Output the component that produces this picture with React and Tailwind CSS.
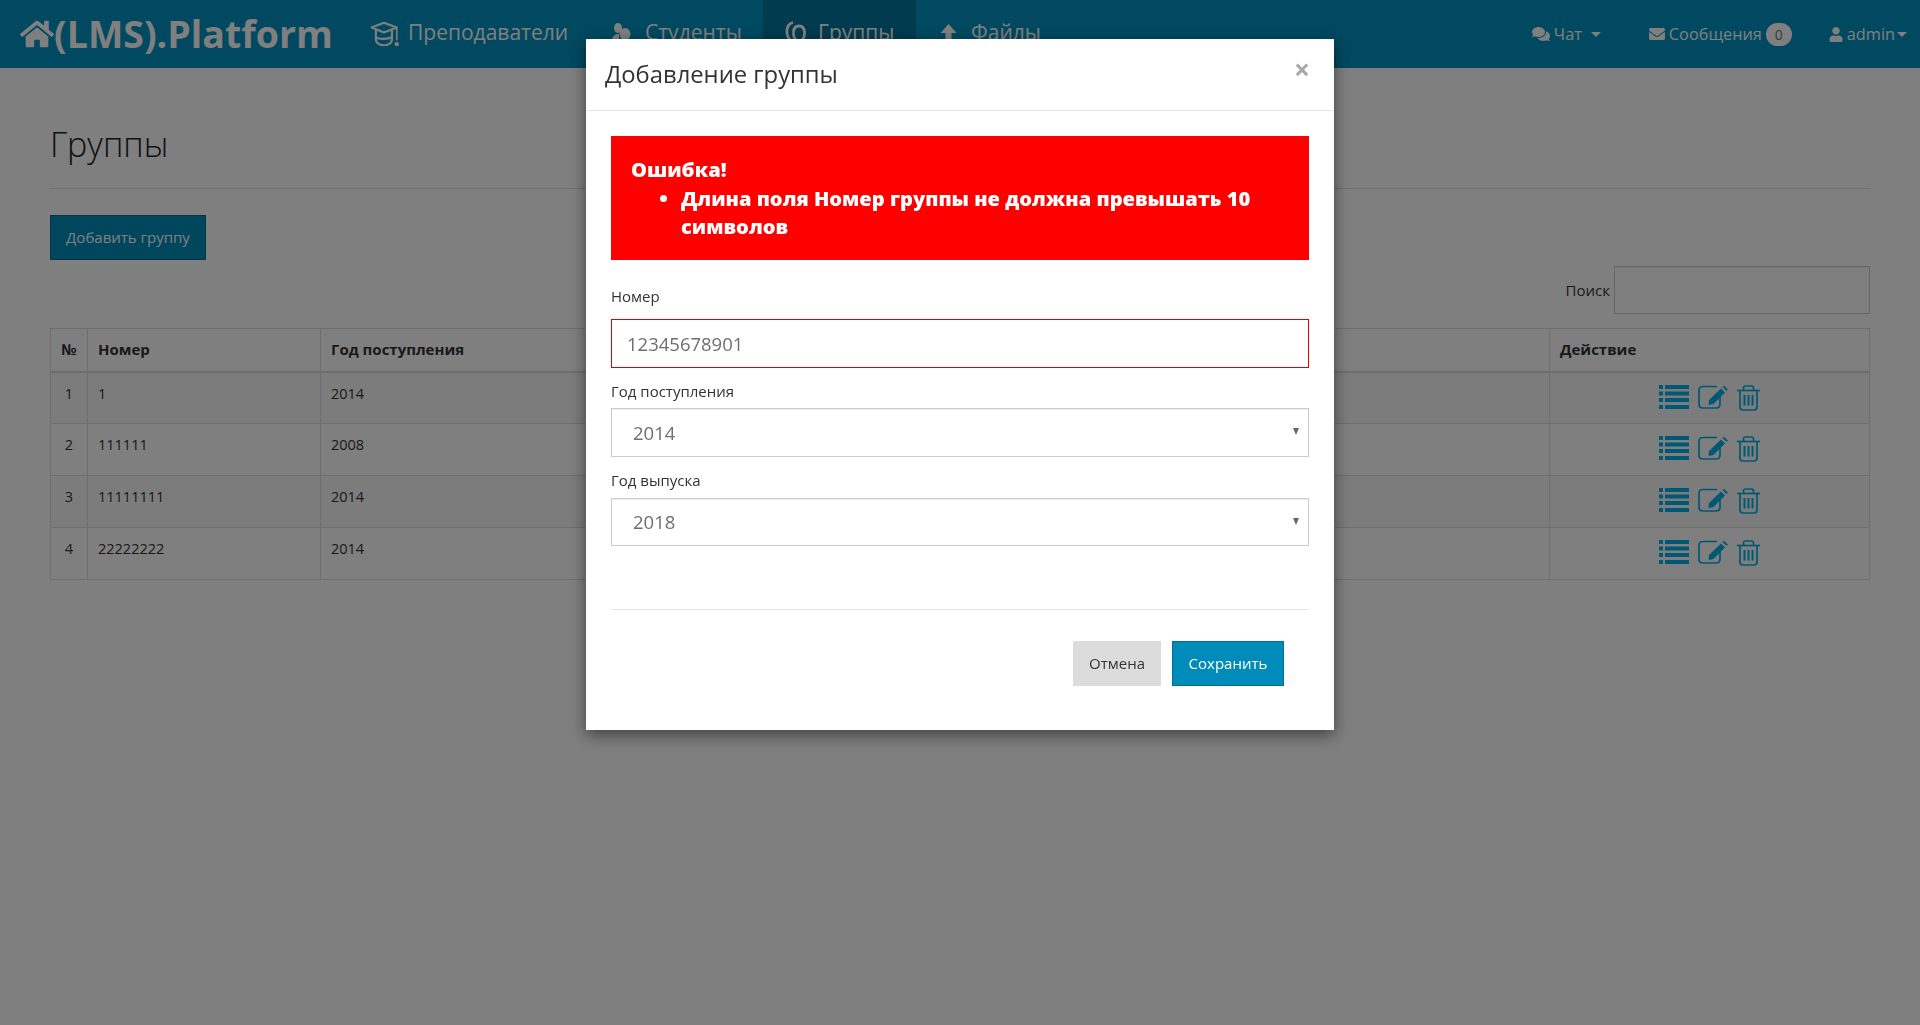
import React from "react";
import { FaHome, FaComments, FaEnvelope, FaUser } from "react-icons/fa";

const Caret = ({ cls }) => (
  <span className={`inline-block w-0 h-0 border-x-[5px] border-x-transparent border-t-[5px] border-t-white ${cls}`} />
);

const Cap = () => (
  <svg width="30" height="30" viewBox="0 0 28 28" fill="none" stroke="white" strokeWidth="2" className="shrink-0">
    <path d="M1.5 8 L13 3.5 L25 8 L13 12.5 Z" strokeLinejoin="round" />
    <path d="M5.5 10 V19 C5.5 23 9 24.5 13 24.5 C17 24.5 20.5 23 20.5 19 V10" />
    <path d="M5.5 17 C8 19 17 19 20.5 17" />
    <path d="M25 8.5 V20" strokeWidth="1.5" />
    <circle cx="25" cy="23.5" r="2" fill="white" stroke="none" />
  </svg>
);

const Students = () => (
  <svg width="22" height="24" viewBox="0 0 22 24" fill="white" className="shrink-0">
    <ellipse cx="7" cy="6" rx="4" ry="5" />
    <path d="M1 19 C1 14 4 12 8 12 L8 19 Z" />
    <ellipse cx="14" cy="12" rx="5.5" ry="6" />
    <path d="M6 24 C6 19 9 17 14 17 C19 17 21 20 21 24 Z" />
  </svg>
);

const Groups = () => (
  <svg width="26" height="26" viewBox="0 0 26 26" fill="none" stroke="white" strokeWidth="2.8" className="shrink-0">
    <path d="M7 19 C2 13 3 3 10 1.5" />
    <path d="M11 24 H14 V20 C9 16 9 5 16 5 C23 5 23 16 18 20 V24 H21" />
  </svg>
);

const ArrowUp = () => (
  <svg width="17" height="20" viewBox="0 0 17 20" fill="white" className="shrink-0">
    <path d="M8.5 0 L16.5 9 H11.5 V20 H5.5 V9 H0.5 Z" />
  </svg>
);

const ListIcon = () => (
  <svg width="30" height="24" viewBox="0 0 30 24" fill="currentColor" className="shrink-0">
    <rect x="0" y="0" width="4" height="4" />
    <rect x="6" y="0" width="24" height="4" />
    <rect x="0" y="6.5" width="4" height="4" />
    <rect x="6" y="6.5" width="24" height="4" />
    <rect x="0" y="13" width="4" height="4" />
    <rect x="6" y="13" width="24" height="4" />
    <rect x="0" y="20" width="4" height="4" />
    <rect x="6" y="20" width="24" height="4" />
  </svg>
);

const EditIcon = () => (
  <svg width="30" height="24" viewBox="0 0 30 24" fill="none" stroke="currentColor" strokeWidth="1.7" className="shrink-0">
    <path d="M19 1.5 H5 Q1 1.5 1 5.5 V19 Q1 23 5 23 H18 Q22 23 22 19 V12" />
    <path d="M11 15 L23 3.5 L27 7.5 L15.5 19 L10.5 20 Z" fill="currentColor" stroke="none" />
    <path d="M24.5 2 L26 0.8 L29.8 4.5 L28.5 6 Z" fill="currentColor" stroke="none" />
  </svg>
);

const TrashIcon = () => (
  <svg width="23" height="26" viewBox="0 0 23 26" fill="none" stroke="currentColor" strokeWidth="1.7" className="shrink-0">
    <path d="M0 5.5 H23" />
    <path d="M6.5 5 V3 Q6.5 1 8.5 1 H14.5 Q16.5 1 16.5 3 V5" />
    <path d="M3 5.5 V22 Q3 25 6 25 H17 Q20 25 20 22 V5.5" />
    <path d="M7.5 10 V20.5 M11.5 10 V20.5 M15.5 10 V20.5" strokeWidth="2" />
  </svg>
);

const rows = [
  ["1", "1", "2014"],
  ["2", "111111", "2008"],
  ["3", "11111111", "2014"],
  ["4", "22222222", "2014"],
];

const Triangle = () => (
  <span className="absolute right-[10px] top-[20px] w-0 h-0 border-x-[3.5px] border-x-transparent border-t-[7px] border-t-[#666]" />
);

export default function App() {
  return (
    <div className="min-h-screen bg-white text-[#333] font-['Open_Sans',sans-serif] text-[14.5px] relative">
      <nav className="h-[68px] bg-[#0092c0] text-white flex items-center">
        <div className="flex items-center w-[370px] pl-[20px] shrink-0">
          <FaHome className="w-[34px] h-[34px] shrink-0" />
          <span className="text-[37.5px] font-bold leading-none">(LMS).Platform</span>
        </div>
        <a className="flex items-center gap-[8px] text-[21px] w-[241px] shrink-0"><Cap /><span className="-mt-[2px]">Преподаватели</span></a>
        <a className="flex items-center gap-[12px] text-[21px] w-[152px] shrink-0"><Students /><span className="-mt-[2px]">Студенты</span></a>
        <a className="flex items-center gap-[9px] text-[21px] h-full w-[153px] shrink-0 pl-[20px] bg-[#0076a0]"><Groups /><span className="-mt-[2px]">Группы</span></a>
        <a className="flex items-center gap-[14px] text-[21px] ml-[24px] shrink-0"><ArrowUp /><span className="-mt-[2px]">Файлы</span></a>
        <div className="ml-auto flex items-center text-[16.3px] pr-[13px]">
          <a className="flex items-center mr-[47px]">
            <FaComments className="w-[18px] h-[16px] mr-[4px]" />
            <span>Чат</span>
            <Caret cls="ml-[9px]" />
          </a>
          <a className="flex items-center mr-[37px]">
            <FaEnvelope className="w-[18px] h-[16px] mr-[3px]" />
            <span>Сообщения</span>
            <span className="ml-[4px] w-[26px] h-[23px] rounded-full bg-white text-[#777] text-[14px] flex items-center justify-center">0</span>
          </a>
          <a className="flex items-center">
            <FaUser className="w-[14px] h-[15px] mr-[4px]" />
            <span>admin</span>
            <Caret cls="ml-[2px]" />
          </a>
        </div>
      </nav>

      <main className="px-[50px]">
        <h1 className="text-[34px] font-light leading-[40px] pt-[56px] pb-[24px] border-b border-[#ddd] text-[#222]">Группы</h1>
        <button className="block mt-[26px] h-[45px] w-[156px] bg-[#008cba] border border-[#007095] text-white text-[15px]">Добавить группу</button>
        <div className="flex justify-end items-center mt-[6px] mb-[14px]">
          <label className="mr-[4px] text-[15px]">Поиск</label>
          <input className="w-[256px] h-[48px] border border-[#ccc] shadow-[inset_0_1px_1px_rgba(0,0,0,0.075)] bg-white" />
        </div>
        <table className="w-full table-fixed border-collapse border border-[#ddd]">
          <colgroup>
            <col className="w-[37px]" />
            <col className="w-[233px]" />
            <col />
            <col className="w-[320px]" />
          </colgroup>
          <thead>
            <tr className="h-[43px] text-[15px]">
              <th className="border border-[#ddd] border-b-2 text-center font-bold whitespace-nowrap pb-[2px]">№</th>
              <th className="border border-[#ddd] border-b-2 text-left font-bold px-[10px] pb-[2px]">Номер</th>
              <th className="border border-[#ddd] border-b-2 text-left font-bold px-[10px] pb-[2px]">Год поступления</th>
              <th className="border border-[#ddd] border-b-2 text-left font-bold px-[10px] pb-[2px]">Действие</th>
            </tr>
          </thead>
          <tbody>
            {rows.map((r, i) => (
              <tr key={r[0]} className={i % 2 === 0 ? "h-[52px] bg-[#f9f9f9]" : "h-[52px]"}>
                <td className="border border-[#ddd] align-top pt-[10px] text-center">{r[0]}</td>
                <td className="border border-[#ddd] align-top pt-[10px] px-[10px]">{r[1]}</td>
                <td className="border border-[#ddd] align-top pt-[10px] px-[10px]">{r[2]}</td>
                <td className="border border-[#ddd] align-top pt-[12px]">
                  <div className="flex justify-center items-start gap-[9px] text-[#00b0e8]">
                    <ListIcon />
                    <EditIcon />
                    <TrashIcon />
                  </div>
                </td>
              </tr>
            ))}
          </tbody>
        </table>
      </main>

      <div className="fixed inset-0 bg-black/50 pt-[39px]">
        <div className="mx-auto w-[748px] h-[691px] bg-white shadow-[0_5px_15px_rgba(0,0,0,0.5)]">
          <div className="h-[72px] border-b border-[#e5e5e5] pl-[19px] pr-[24px] flex justify-between">
            <h4 className="text-[23.8px] leading-[70px] text-[#333]">Добавление группы</h4>
            <span className="text-[#a8a8a8] font-bold text-[28px] leading-[60px]">×</span>
          </div>
          <div className="px-[25px] pt-[25px]">
            <div className="h-[124px] bg-[#ff0000] text-white font-extrabold text-[20.1px] leading-[28.5px] pt-[20px] pl-[20px] pr-[20px]">
              <div>Ошибка!</div>
              <ul className="list-disc pl-[50px]">
                <li>Длина поля Номер группы не должна превышать 10 символов</li>
              </ul>
            </div>
            <label className="block mt-[25px] h-[23px] leading-[23px] text-[15px] text-[#333]">Номер</label>
            <input readOnly value="12345678901" className="block w-full mt-[11px] h-[49px] border border-[#e00000] px-[15px] text-[18.5px] text-[#6f6f6f] outline-none" />
            <label className="block mt-[12px] h-[23px] leading-[23px] text-[15px]">Год поступления</label>
            <div className="relative mt-[5px]">
              <select defaultValue="2014" className="block w-full h-[49px] border border-[#ccc] shadow-[inset_0_1px_1px_rgba(0,0,0,0.075)] pl-[21px] text-[18.5px] text-[#6f6f6f] appearance-none bg-white outline-none">
                <option>2014</option>
              </select>
              <Triangle />
            </div>
            <label className="block mt-[12px] h-[23px] leading-[23px] text-[15px]">Год выпуска</label>
            <div className="relative mt-[6px]">
              <select defaultValue="2018" className="block w-full h-[48px] border border-[#ccc] shadow-[inset_0_1px_1px_rgba(0,0,0,0.075)] pl-[21px] text-[18.5px] text-[#6f6f6f] appearance-none bg-white outline-none">
                <option>2018</option>
              </select>
              <Triangle />
            </div>
            <div className="mt-[63px] border-t border-[#e5e5e5] pt-[31px] flex justify-end pr-[25px] gap-[11px]">
              <button className="w-[88px] h-[45px] bg-[#dcdcdc] text-[#333] text-[15px]">Отмена</button>
              <button className="w-[112px] h-[45px] bg-[#008cba] border border-[#007095] text-white text-[15px]">Сохранить</button>
            </div>
          </div>
        </div>
      </div>
    </div>
  );
}
